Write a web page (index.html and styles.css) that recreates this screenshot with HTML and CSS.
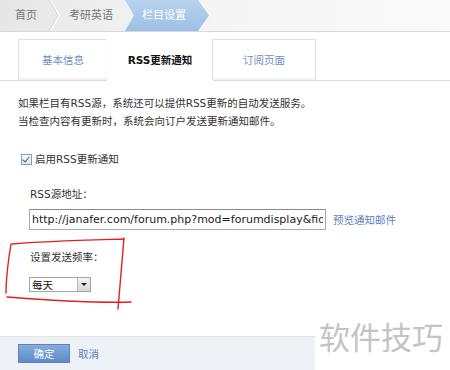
FILE: index.html
```html
<!DOCTYPE html>
<html lang="zh-CN">
<head>
  <meta charset="UTF-8">
  <title>栏目设置</title>
  <link rel="stylesheet" href="styles.css">
</head>
<body>
  <!-- 面包屑 -->
  <div class="crumbs">
    <a class="crumb" href="#">首页</a>
    <svg class="sep" width="12" height="31" viewBox="0 0 12 31"><polyline points="1,0 10,15.5 1,31" fill="none" stroke="#fff" stroke-width="2"/><polyline points="0,0 9,15.5 0,31" fill="none" stroke="#cfcfcf" stroke-width="1"/></svg>
    <a class="crumb" href="#">考研英语</a>
    <span class="crumb current">栏目设置</span>
  </div>

  <!-- 选项卡 -->
  <div class="tabs">
    <a class="tab" href="#">基本信息</a>
    <a class="tab active" href="#">RSS更新通知</a>
    <a class="tab" href="#">订阅页面</a>
  </div>

  <div class="content">
    <p class="intro">如果栏目有RSS源，系统还可以提供RSS更新的自动发送服务。<br>当检查内容有更新时，系统会向订户发送更新通知邮件。</p>

    <label class="check"><span class="box"></span>启用RSS更新通知</label>

    <div class="field">
      <div class="label">RSS源地址：</div>
      <div class="row">
        <input class="url" type="text" value="http://janafer.com/forum.php?mod=forumdisplay&amp;fid=2">
        <a class="link" href="#">预览通知邮件</a>
      </div>
    </div>

    <div class="field">
      <div class="label">设置发送频率：</div>
      <div class="select"><span>每天</span><span class="arrow"></span></div>
    </div>
  </div>

  <div class="footer">
    <button class="ok">确定</button>
    <a class="link" href="#">取消</a>
  </div>

  <!-- 红笔标注 -->
  <svg class="mark" width="140" height="80" viewBox="0 235 140 80">
    <path d="M12 244 C 45 241, 90 240, 124 239" />
    <path d="M124 238 C 122 262, 120 285, 118 309" />
    <path d="M7 297 C 45 300, 95 303, 131 302" />
    <path d="M11 244 C 8 262, 6 278, 6 293" />
  </svg>

  <div class="watermark">软件技巧</div>
</body>
</html>
```

FILE: styles.css
```css
body {
  margin: 0;
  width: 450px;
  height: 370px;
  position: relative;
  overflow: hidden;
  background: #fff;
  font-family: "DejaVu Sans", "Noto Sans CJK SC", sans-serif;
  font-size: 10.5px;
  color: #333;
}
a {
  text-decoration: none;
}
.link {
  color: #5b7fbf;
}

/* 面包屑 */
.crumbs {
  height: 31px;
  display: flex;
  align-items: center;
  border-bottom: 1px solid #d8d8d8;
  background: linear-gradient(to right, #e6e6e6, #f4f4f4 40%, #fafafa);
  font-size: 11px;
}
.crumb {
  color: #777;
  line-height: 31px;
}
.crumbs .crumb:first-child {
  padding: 0 12px 0 15px;
}
.sep {
  display: block;
}
.crumbs .crumb:nth-child(3) {
  padding: 0 0 0 8px;
  width: 46px;
}
.current {
  margin-left: 10px;
  width: 84px;
  padding-left: 17px;
  box-sizing: border-box;
  color: #fff;
  background: linear-gradient(#b9d2ee, #9dbfe6);
  clip-path: polygon(0 0, 73px 0, 84px 50%, 73px 100%, 0 100%, 9px 50%);
}

/* 选项卡 */
.tabs {
  display: flex;
  margin-top: 7px;
  padding-left: 18px;
  border-bottom: 1px solid #dcdcdc;
}
.tab {
  height: 40px;
  line-height: 40px;
  text-align: center;
  color: #6f8dc0;
  border: 1px solid #e2e2e2;
  border-bottom: none;
  margin-left: -1px;
  box-shadow: inset 0 -2px 2px #f0f0f0;
}
.tab:nth-child(1) { width: 88px; margin-left: 0; }
.tab:nth-child(2) { width: 104px; }
.tab:nth-child(3) { width: 102px; }
.tab.active {
  color: #111;
  font-weight: bold;
  border-color: transparent;
  box-shadow: none;
  background: #fff;
  margin-bottom: -1px;
  height: 41px;
}

/* 内容 */
.content {
  padding: 13px 0 0 18px;
}
.intro {
  margin: 0;
  line-height: 18px;
}
.check {
  display: flex;
  align-items: center;
  margin: 20px 0 0 3px;
  line-height: 18px;
}
.box {
  width: 9px;
  height: 9px;
  border: 1px solid #8a9bb4;
  margin-right: 3px;
  background: linear-gradient(#fff, #dde6f2);
  position: relative;
}
.box::after {
  content: "";
  position: absolute;
  left: 2px;
  top: 0;
  width: 3px;
  height: 6px;
  border: solid #3a5a98;
  border-width: 0 1.5px 1.5px 0;
  transform: rotate(40deg);
}
.field {
  padding-left: 12px;
}
.label {
  margin-top: 17px;
  line-height: 18px;
}
.row {
  display: flex;
  align-items: center;
  margin-top: 6px;
}
.url {
  width: 297px;
  height: 21px;
  box-sizing: border-box;
  padding: 0 2px;
  border: 1px solid #a9a9a9;
  border-top-color: #8a8a8a;
  font-family: "DejaVu Sans", sans-serif;
  font-size: 11px;
  color: #222;
  margin: 0 7px 0 -1px;
}
.field + .field .label {
  margin-top: 18px;
}
.select {
  display: flex;
  align-items: center;
  justify-content: space-between;
  width: 62px;
  height: 15px;
  box-sizing: border-box;
  margin: 11px 0 0 -1px;
  border: 1px solid #a5a5a5;
  padding-left: 2px;
  color: #111;
}
.arrow {
  width: 12px;
  height: 13px;
  border-left: 1px solid #b5b5b5;
  background: linear-gradient(#f4f4f4, #d8d8d8);
  position: relative;
}
.arrow::after {
  content: "";
  position: absolute;
  left: 3px;
  top: 5px;
  border: 3px solid transparent;
  border-top: 3px solid #222;
}

/* 底部 */
.footer {
  position: absolute;
  left: 0;
  right: 0;
  bottom: 0;
  height: 33px;
  display: flex;
  align-items: center;
  padding-left: 18px;
  border-top: 1px solid #dfe5ee;
  background: #eef2f7;
}
.ok {
  width: 52px;
  height: 19px;
  padding: 0;
  margin-right: 8px;
  border: 1px solid #5a84bf;
  background: linear-gradient(#86acdc, #5d8bc8);
  color: #fff;
  font-family: "Noto Sans CJK SC", sans-serif;
  font-size: 10.5px;
}

/* 标注与水印 */
.mark {
  position: absolute;
  left: 0;
  top: 235px;
}
.mark path {
  fill: none;
  stroke: #e3201e;
  stroke-width: 1.4;
  stroke-linecap: round;
}
.watermark {
  position: absolute;
  left: 315px;
  top: 310px;
  width: 135px;
  height: 60px;
  padding-left: 4px;
  box-sizing: border-box;
  background: #fff;
  color: #c4c4c4;
  font-family: "Noto Sans CJK SC", sans-serif;
  font-size: 31px;
  line-height: 52px;
}
```
